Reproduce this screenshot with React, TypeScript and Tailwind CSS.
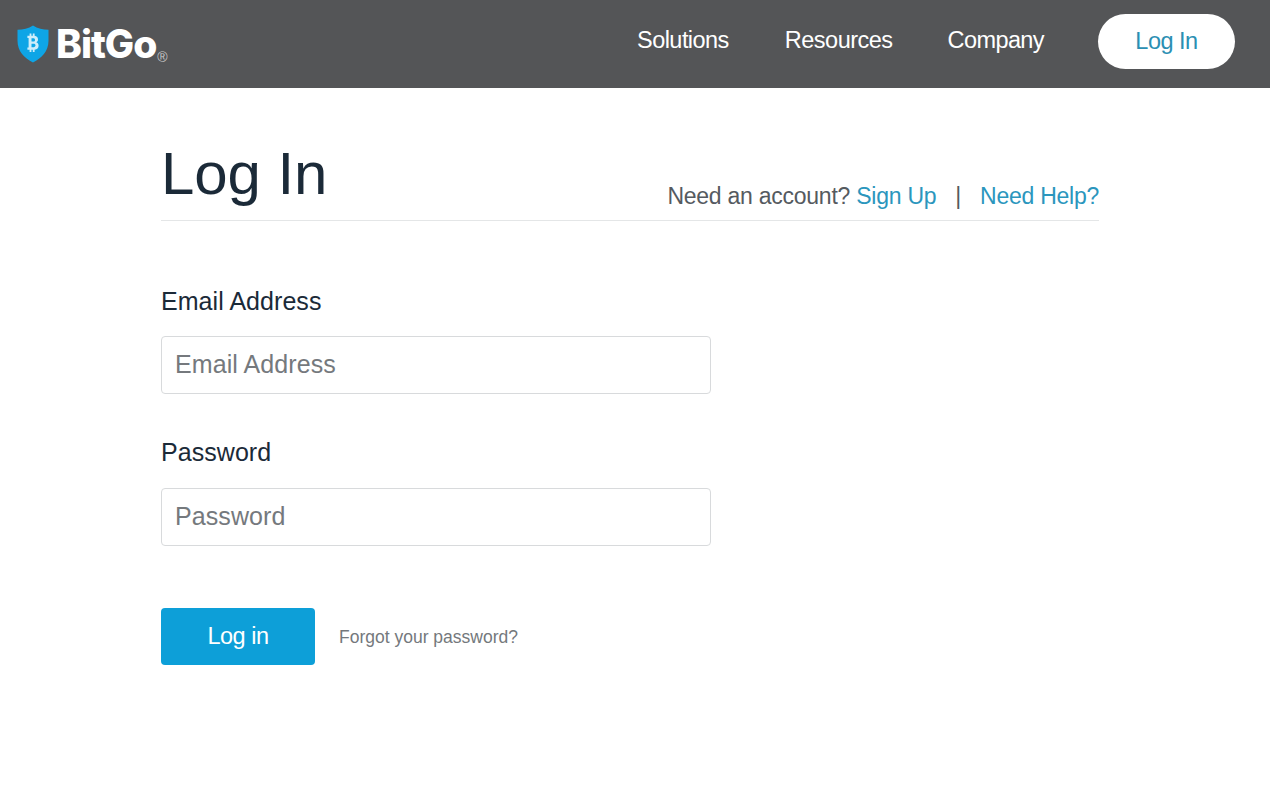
import React from "react";

const Shield: React.FC = () => (
  <svg width="32" height="38" viewBox="0 0 32 36" preserveAspectRatio="none" aria-hidden="true">
    <path d="M16 0.5C20.5 3.2 26 4.6 31.5 4.6V15C31.5 25 24.5 31.8 16 35.5C7.5 31.8 0.5 25 0.5 15V4.6C6 4.6 11.5 3.2 16 0.5Z" fill="#0ea5e6" />
    <path
      d="M12.6 10.2V8H14.4V10.1H15.8V8H17.6V10.2C19.9 10.6 21 11.9 21 13.7C21 15 20.3 15.9 19.3 16.4C20.7 16.9 21.6 18 21.6 19.6C21.6 21.7 20.2 23.1 17.6 23.4V25.6H15.8V23.5H14.4V25.6H12.6V23.5H10.4V21.2H11.6V12.4H10.4V10.2H12.6ZM14.5 12.6V15.6H16.3C17.4 15.6 18 15 18 14.1C18 13.2 17.4 12.6 16.3 12.6H14.5ZM14.5 17.7V21H16.6C17.8 21 18.5 20.4 18.5 19.3C18.5 18.3 17.8 17.7 16.6 17.7H14.5Z"
      fill="#ffffff"
      fillOpacity="0.8"
    />
  </svg>
);

const App: React.FC = () => {
  return (
    <div className="min-h-[790px] bg-white font-['Liberation_Sans',Arial,sans-serif]">
      <header className="h-[88px] bg-[#545557] flex items-center justify-between pl-[17px] pr-[35px]">
        <a className="flex items-center -mt-[1px]" href="#">
          <Shield />
          <span className="ml-[7px] font-['Inter',sans-serif] font-extrabold text-[39px] leading-none text-white tracking-[-1px]">
            BitGo
          </span>
          <span className="self-end ml-[1px] mb-[-1px] text-[14px] leading-none text-[#c8c8c8]">®</span>
        </a>
        <nav className="flex items-center">
          <a href="#" className="text-[23.5px] text-white tracking-[-0.55px] mr-[56px] -mt-[6px]">Solutions</a>
          <a href="#" className="text-[23.5px] text-white tracking-[-0.5px] mr-[55px] -mt-[6px]">Resources</a>
          <a href="#" className="text-[23.5px] text-white tracking-[-0.6px] mr-[54px] -mt-[6px]">Company</a>
          <a href="#" className="w-[137px] h-[55px] -mt-[5px] rounded-full bg-white flex items-center justify-center text-[23.5px] tracking-[-0.5px] text-[#2b8fb3]">
            Log In
          </a>
        </nav>
      </header>
      <main className="w-[938px] ml-[161px]">
        <div className="flex items-end justify-between h-[133px] border-b border-[#e4e6e7] pb-[9px]">
          <h1 className="text-[60px] leading-none tracking-[-0.1px] text-[#1b2a38] mb-[7px]">Log In</h1>
          <div className="text-[23px] tracking-[-0.25px] leading-[30px] text-[#555a60]">
            Need an account? <a href="#" className="text-[#2b96bd]">Sign Up</a>
            <span className="mx-[19px] text-[#555a60]">|</span>
            <a href="#" className="text-[#2b96bd]">Need Help?</a>
          </div>
        </div>
        <form className="w-[550px] pt-[66px]">
          <label className="block text-[25px] leading-[28px] tracking-[0.05px] text-[#1b2a38] mb-[21px]">Email Address</label>
          <input
            type="text"
            placeholder="Email Address"
            className="block w-full h-[58px] px-[13px] pb-[2px] border border-[#d8dadc] rounded-[4px] text-[25px] tracking-[0.08px] text-[#1b2a38] placeholder:text-[#75797d] outline-none"
          />
          <label className="block text-[25px] leading-[28px] tracking-[0.05px] text-[#1b2a38] mt-[44px] mb-[22px]">Password</label>
          <input
            type="password"
            placeholder="Password"
            className="block w-full h-[58px] px-[13px] pb-[2px] border border-[#d8dadc] rounded-[4px] text-[25px] tracking-[0.08px] text-[#1b2a38] placeholder:text-[#75797d] outline-none"
          />
          <div className="flex items-center mt-[62px]">
            <button type="button" className="w-[154px] h-[57px] rounded-[4px] bg-[#0d9fd8] text-white text-[23.5px] tracking-[-0.5px]">
              Log in
            </button>
            <a href="#" className="ml-[24px] mt-[2px] text-[17.5px] text-[#74787c]">Forgot your password?</a>
          </div>
        </form>
      </main>
    </div>
  );
};

export default App;
